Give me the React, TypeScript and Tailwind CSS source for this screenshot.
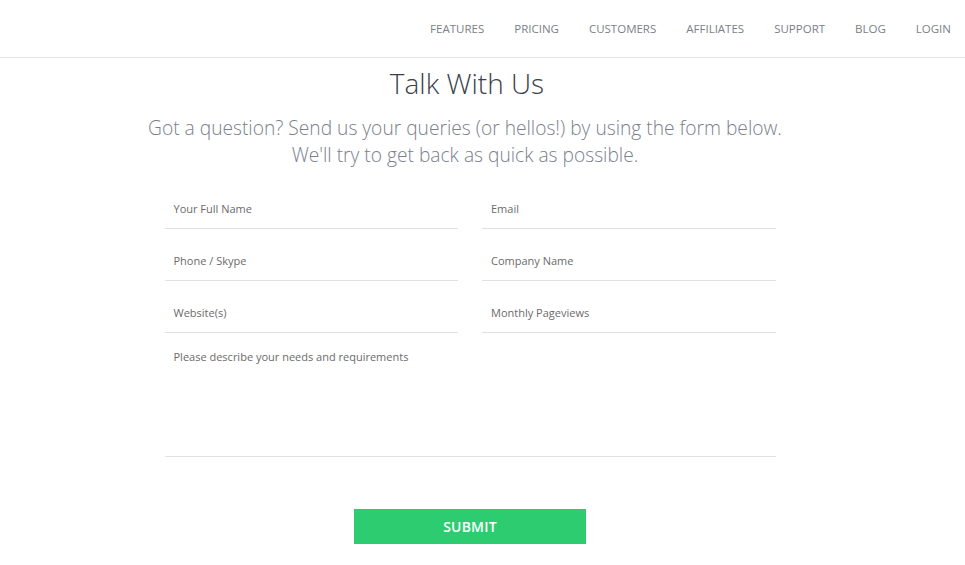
import React from "react";

const navItems = ["FEATURES", "PRICING", "CUSTOMERS", "AFFILIATES", "SUPPORT", "BLOG", "LOGIN"];

const Field = ({ label }: { label: string }) => {
  return (
    <div className="h-[40px] border-b border-[#e1e1e1] flex items-center px-[9px] pt-[1px]">
      <span className="text-[11px] text-[#6b6b6b]">{label}</span>
    </div>
  );
};

const App = () => {
  return (
    <div className="w-[965px] h-[565px] bg-white overflow-hidden" style={{ fontFamily: '"Open Sans", sans-serif' }}>
      <header className="h-[58px] border-b border-[#e5e5e5] flex justify-end items-center pr-[14px]">
        <nav className="flex gap-[30px] text-[11.5px] text-[#7b7f87]">
          {navItems.map((item) => (
            <a key={item} className="cursor-pointer">
              {item}
            </a>
          ))}
        </nav>
      </header>

      <main className="w-[940px] flex flex-col items-center">
        <h1 className="mt-[5px] text-[28px] leading-[40px] font-light text-[#3a3f4a] pr-[6px]">Talk With Us</h1>
        <p className="mt-[11px] text-[19.2px] leading-[27px] font-light text-[#7a808c] text-center pr-[10px]">
          Got a question? Send us your queries (or hellos!) by using the form below.
          <br />
          We'll try to get back as quick as possible.
        </p>

        <form className="mt-[21px] w-[611px] flex flex-col">
          <div className="grid grid-cols-2 gap-x-[24px] gap-y-[12px]">
            <Field label="Your Full Name" />
            <Field label="Email" />
            <Field label="Phone / Skype" />
            <Field label="Company Name" />
            <Field label="Website(s)" />
            <Field label="Monthly Pageviews" />
          </div>
          <div className="mt-[1px] h-[123px] border-b border-[#e1e1e1] px-[9px] pt-[9px]">
            <span className="text-[11px] text-[#6b6b6b]">Please describe your needs and requirements</span>
          </div>
          <div className="mt-[52px] flex justify-center">
            <button
              type="button"
              className="w-[232px] h-[35px] bg-[#2ecc71] text-white text-[14px] font-semibold tracking-[0.2px]"
            >
              SUBMIT
            </button>
          </div>
        </form>
      </main>
    </div>
  );
};

export default App;
